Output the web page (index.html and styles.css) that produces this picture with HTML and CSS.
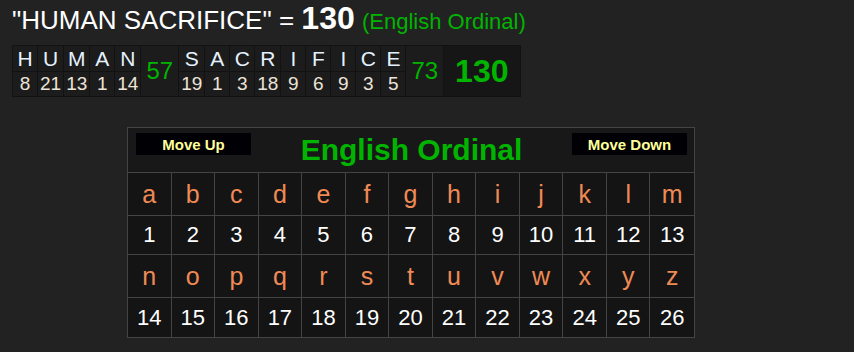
FILE: index.html
```html
<!DOCTYPE html>
<html>
<head>
<meta charset="utf-8">
<link rel="stylesheet" href="styles.css">
</head>
<body>
<div class="page">
  <h1 class="phrase">"HUMAN SACRIFICE" = <span class="phrase-total">130</span> <span class="phrase-cipher">(English Ordinal)</span></h1>

  <table class="breakdown">
    <tr class="b-letters">
      <td>H</td><td>U</td><td>M</td><td>A</td><td>N</td>
      <td class="b-sum" rowspan="2">57</td>
      <td>S</td><td>A</td><td>C</td><td>R</td><td>I</td><td>F</td><td>I</td><td>C</td><td>E</td>
      <td class="b-sum" rowspan="2">73</td>
      <td class="b-total" rowspan="2">130</td>
    </tr>
    <tr class="b-values">
      <td>8</td><td>21</td><td>13</td><td>1</td><td>14</td>
      <td>19</td><td>1</td><td>3</td><td>18</td><td>9</td><td>6</td><td>9</td><td>3</td><td>5</td>
    </tr>
  </table>

  <div class="cipher-wrap">
    <div class="cipher">
      <div class="cipher-head">
        <button class="move-btn">Move Up</button>
        <div class="cipher-title">English Ordinal</div>
        <button class="move-btn">Move Down</button>
      </div>
      <div class="cipher-grid">
        <div class="c-letter">a</div><div class="c-letter">b</div><div class="c-letter">c</div><div class="c-letter">d</div><div class="c-letter">e</div><div class="c-letter">f</div><div class="c-letter">g</div><div class="c-letter">h</div><div class="c-letter">i</div><div class="c-letter">j</div><div class="c-letter">k</div><div class="c-letter">l</div><div class="c-letter">m</div>
        <div class="c-num">1</div><div class="c-num">2</div><div class="c-num">3</div><div class="c-num">4</div><div class="c-num">5</div><div class="c-num">6</div><div class="c-num">7</div><div class="c-num">8</div><div class="c-num">9</div><div class="c-num">10</div><div class="c-num">11</div><div class="c-num">12</div><div class="c-num">13</div>
        <div class="c-letter">n</div><div class="c-letter">o</div><div class="c-letter">p</div><div class="c-letter">q</div><div class="c-letter">r</div><div class="c-letter">s</div><div class="c-letter">t</div><div class="c-letter">u</div><div class="c-letter">v</div><div class="c-letter">w</div><div class="c-letter">x</div><div class="c-letter">y</div><div class="c-letter">z</div>
        <div class="c-num">14</div><div class="c-num">15</div><div class="c-num">16</div><div class="c-num">17</div><div class="c-num">18</div><div class="c-num">19</div><div class="c-num">20</div><div class="c-num">21</div><div class="c-num">22</div><div class="c-num">23</div><div class="c-num">24</div><div class="c-num">25</div><div class="c-num">26</div>
      </div>
    </div>
  </div>
</div>
</body>
</html>
```

FILE: styles.css
```css
html, body {
  margin: 0;
  padding: 0;
  background: #222222;
}

.page {
  padding: 0 12px;
  font-family: "Liberation Sans", Arial, sans-serif;
  color: #ffffff;
}

.phrase {
  margin: 0;
  height: 37px;
  font-size: 26px;
  font-weight: normal;
  line-height: 37px;
  color: #ffffff;
  white-space: nowrap;
}

.phrase-total {
  font-size: 32px;
  font-weight: bold;
}

.phrase-cipher {
  font-size: 22px;
  color: #00b400;
}

.breakdown {
  margin-top: 8px;
  border-collapse: collapse;
  border: 1px solid #121212;
}

.breakdown td {
  border: 1px solid #121212;
  background: #1c1c1c;
  text-align: center;
  padding: 0 2px;
  line-height: 24px;
}

.b-letters td {
  font-size: 21px;
  color: #e4f2ff;
  min-width: 20px;
  height: 25px;
}

.b-values td {
  font-size: 19px;
  color: #ece4d8;
  height: 24px;
}

.breakdown .b-sum {
  font-size: 24px;
  color: #00b400;
  padding: 0 5px;
  background: #1c1c1c;
}

.breakdown .b-total {
  font-size: 32px;
  font-weight: bold;
  color: #00b400;
  background: #161616;
  padding: 0 11px;
}

.cipher-wrap {
  margin-top: 30px;
  padding-left: 115px;
}

.cipher {
  width: 566px;
  border: 1px solid #444444;
  background: #181818;
}

.cipher-head {
  height: 44px;
  display: flex;
  align-items: flex-start;
  justify-content: space-between;
  padding: 5px 7px 0 8px;
  box-sizing: border-box;
}

.move-btn {
  width: 115px;
  height: 22px;
  background: #000005;
  border: none;
  color: #ffff99;
  font-family: "Liberation Sans", Arial, sans-serif;
  font-weight: bold;
  font-size: 15px;
  padding: 0;
}

.cipher-title {
  font-size: 30px;
  font-weight: bold;
  color: #00b400;
  line-height: 34px;
  margin-top: 0;
}

.cipher-grid {
  display: grid;
  grid-template-columns: repeat(13, 1fr);
  grid-template-rows: 43px 39px 43px 39px;
  border-top: 1px solid #444444;
}

.c-letter, .c-num {
  display: flex;
  align-items: center;
  justify-content: center;
  background: #141414;
  border-right: 1px solid #444444;
  border-bottom: 1px solid #444444;
}

.c-letter:nth-child(13n), .c-num:nth-child(13n) {
  border-right: none;
}

.c-letter:nth-last-child(-n+13), .c-num:nth-last-child(-n+13) {
  border-bottom: none;
}

.c-letter {
  font-size: 25px;
  color: #f08a55;
}

.c-num {
  font-size: 22px;
  color: #ffffff;
}
```
